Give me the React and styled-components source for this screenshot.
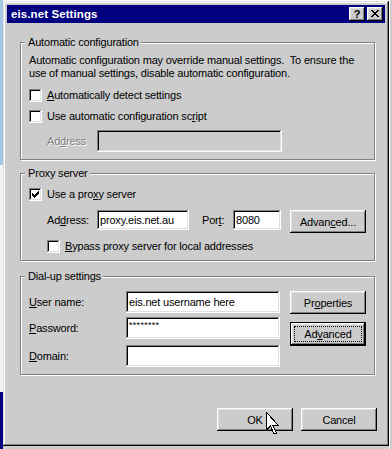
import React from "react";
import styled, { createGlobalStyle, css } from "styled-components";

const FACE = "#cccccc";

const raised = css`
  box-shadow: inset -1px -1px #000, inset 1px 1px #fff, inset -2px -2px #808080,
    inset 2px 2px #dfdfdf;
`;
const sunken = css`
  box-shadow: inset -1px -1px #fff, inset 1px 1px #808080, inset -2px -2px #dfdfdf,
    inset 2px 2px #000;
`;

const Global = createGlobalStyle`
  html, body { margin: 0; padding: 0; background: ${FACE}; }
  body {
    font-family: "Liberation Sans", Arial, sans-serif;
    font-size: 11px;
    letter-spacing: -0.18px;
    color: #000;
  }
  * { box-sizing: border-box; }
`;

const Page = styled.div`
  position: relative;
  display: flex;
  width: 392px;
  height: 449px;
  overflow: hidden;
  background: linear-gradient(#ffffff 0 1px, ${FACE} 1px);
`;

const LeftStrip = styled.div`
  flex: none;
  width: 3px;
  background: linear-gradient(
    to bottom,
    #a4c8e4 0,
    #a4c8e4 165px,
    #f2f2f2 165px,
    #f2f2f2 392px,
    #000080 392px
  );
`;

const RightStrip = styled.div`
  flex: 1;
  border-left: 1px solid #ffffff;
  background: ${FACE};
`;

const Dialog = styled.div`
  flex: none;
  width: 386px;
  height: 445px;
  margin-top: 1px;
  padding: 4px;
  background: ${FACE};
  box-shadow: inset -1px -1px #000, inset 1px 1px #dfdfdf, inset -2px -2px #808080,
    inset 2px 2px #fff;
  display: flex;
  flex-direction: column;
`;

const TitleBar = styled.div`
  flex: none;
  height: 18px;
  background: #000080;
  display: flex;
  align-items: center;
  padding: 0 2px 0 4px;
`;

const TitleText = styled.span`
  flex: 1;
  color: #fff;
  font-weight: bold;
  font-size: 11.5px;
  letter-spacing: 0.1px;
  white-space: nowrap;
`;

const CaptionButton = styled.div`
  width: 16px;
  height: 14px;
  margin-left: ${(p) => p.$ml || 0}px;
  background: ${FACE};
  ${raised};
  display: flex;
  align-items: center;
  justify-content: center;
  color: #000;
  font-weight: bold;
  font-size: 11px;
  line-height: 14px;
  padding-bottom: 1px;
`;

const Body = styled.div`
  flex: 1;
  display: flex;
  flex-direction: column;
  padding: 0 10px 0 13px;
`;

const Group = styled.div`
  margin-top: ${(p) => p.$mt}px;
  border: 1px solid #808080;
  box-shadow: inset 1px 1px #fff, 1px 1px #fff;
  padding: 0 8px ${(p) => p.$pb}px 8px;
  display: flex;
  flex-direction: column;
`;

const Legend = styled.div`
  align-self: flex-start;
  height: 13px;
  line-height: 13px;
  margin: -7px 0 0 -4px;
  padding: 0 2px 0 3px;
  background: ${FACE};
  white-space: nowrap;
`;

const Paragraph = styled.div`
  margin-top: ${(p) => p.$mt}px;
  line-height: 13px;
  white-space: pre;
`;

const CheckRow = styled.label`
  display: flex;
  align-items: center;
  height: 13px;
  margin: ${(p) => p.$mt}px 0 0 ${(p) => p.$indent || 0}px;
`;

const CheckBox = styled.span`
  flex: none;
  width: 13px;
  height: 13px;
  background: #fff;
  ${sunken};
  display: flex;
  align-items: center;
  justify-content: center;
`;

const CheckText = styled.span`
  margin-left: 5px;
  line-height: 13px;
  white-space: nowrap;
`;

const FieldRow = styled.div`
  display: flex;
  align-items: flex-start;
  margin: ${(p) => p.$mt || 0}px 0 0 ${(p) => p.$indent || 0}px;
`;

const Label = styled.span`
  flex: none;
  width: ${(p) => p.$w}px;
  margin-left: ${(p) => p.$ml || 0}px;
  height: ${(p) => p.$h}px;
  line-height: ${(p) => p.$h}px;
  white-space: nowrap;
  color: ${(p) => (p.$disabled ? "#808080" : "#000")};
  text-shadow: ${(p) => (p.$disabled ? "1px 1px 0 #fff" : "none")};
`;

const TextBox = styled.div`
  flex: none;
  width: ${(p) => p.$w}px;
  height: ${(p) => p.$h}px;
  background: ${(p) => (p.$disabled ? FACE : "#fff")};
  ${sunken};
  padding: 0 3px;
  display: flex;
  align-items: center;
  white-space: nowrap;
  overflow: hidden;
`;

const Mask = styled.span`
  font-size: 9px;
  letter-spacing: 0.3px;
  align-self: flex-start;
  margin-top: 3px;
  line-height: 10px;
`;

const Button = styled.div`
  flex: none;
  width: ${(p) => p.$w || 76}px;
  height: ${(p) => p.$h || 23}px;
  margin: ${(p) => p.$mt || 0}px 0 0 ${(p) => p.$ml || 0}px;
  background: ${FACE};
  display: flex;
  align-items: center;
  justify-content: center;
  white-space: nowrap;
  position: relative;
  ${(p) =>
    p.$default
      ? css`
          border: 1px solid #000;
          padding: 3px;
          box-shadow: inset -1px -1px #000, inset 1px 1px #fff, inset -2px -2px #808080,
            inset 2px 2px #dfdfdf;
        `
      : raised};
`;

const Focus = styled.span`
  flex: 1;
  align-self: stretch;
  border: 1px dotted #000;
  display: flex;
  align-items: center;
  justify-content: center;
`;

const DialupRow = styled.div`
  display: flex;
  margin-top: 8px;
`;

const Column = styled.div`
  display: flex;
  flex-direction: column;
  margin-left: ${(p) => p.$ml || 0}px;
`;

const Footer = styled.div`
  display: flex;
  justify-content: flex-end;
  gap: 8px;
  margin: 33px -2px 0 0;
`;

const Cursor = styled.svg`
  position: absolute;
  left: 266px;
  top: 412px;
  pointer-events: none;
`;

const CloseGlyph = () => (
  <svg width="8" height="7" viewBox="0 0 8 7" shapeRendering="crispEdges">
    <g fill="#000">
      <rect x="0" y="0" width="2" height="1" />
      <rect x="6" y="0" width="2" height="1" />
      <rect x="1" y="1" width="2" height="1" />
      <rect x="5" y="1" width="2" height="1" />
      <rect x="2" y="2" width="4" height="1" />
      <rect x="3" y="3" width="2" height="1" />
      <rect x="2" y="4" width="4" height="1" />
      <rect x="1" y="5" width="2" height="1" />
      <rect x="5" y="5" width="2" height="1" />
      <rect x="0" y="6" width="2" height="1" />
      <rect x="6" y="6" width="2" height="1" />
    </g>
  </svg>
);

const CheckMark = () => (
  <svg width="7" height="7" viewBox="0 0 7 7" shapeRendering="crispEdges">
    <g fill="#000">
      <rect x="6" y="0" width="1" height="1" />
      <rect x="5" y="1" width="2" height="1" />
      <rect x="0" y="2" width="1" height="1" />
      <rect x="4" y="2" width="3" height="1" />
      <rect x="0" y="3" width="2" height="1" />
      <rect x="3" y="3" width="3" height="1" />
      <rect x="0" y="4" width="5" height="1" />
      <rect x="1" y="5" width="3" height="1" />
      <rect x="2" y="6" width="1" height="1" />
    </g>
  </svg>
);

const Check = ({ checked, indent, mt, children }) => (
  <CheckRow $indent={indent} $mt={mt}>
    <CheckBox>{checked && <CheckMark />}</CheckBox>
    <CheckText>{children}</CheckText>
  </CheckRow>
);

export default function App() {
  return (
    <>
      <Global />
      <Page>
        <LeftStrip />
        <Dialog>
          <TitleBar>
            <TitleText>eis.net Settings</TitleText>
            <CaptionButton>?</CaptionButton>
            <CaptionButton $ml={2}>
              <CloseGlyph />
            </CaptionButton>
          </TitleBar>
          <Body>
            <Group $mt={19} $pb={7}>
              <Legend>Automatic configuration</Legend>
              <Paragraph $mt={5}>
                {"Automatic configuration may override manual settings.  To ensure the"}
                <br />
                {"use of manual settings, disable automatic configuration."}
              </Paragraph>
              <Check mt={9}>
                <u>A</u>utomatically detect settings
              </Check>
              <Check mt={8}>
                Use automatic configuration sc<u>r</u>ipt
              </Check>
              <FieldRow $mt={7} $indent={18}>
                <Label $w={50} $h={22} $disabled>
                  Ad<u>d</u>ress
                </Label>
                <TextBox $w={185} $h={22} $disabled />
              </FieldRow>
            </Group>

            <Group $mt={13} $pb={7}>
              <Legend>Proxy server</Legend>
              <Check mt={8} checked>
                Use a pro<u>x</u>y server
              </Check>
              <FieldRow $mt={9} $indent={18}>
                <Label $w={50} $h={20}>
                  Ad<u>d</u>ress:
                </Label>
                <TextBox $w={92} $h={20}>proxy.eis.net.au</TextBox>
                <Label $w={31} $h={20} $ml={13}>
                  Por<u>t</u>:
                </Label>
                <TextBox $w={48} $h={20}>8080</TextBox>
                <Button $ml={9}>
                  Advan<u>c</u>ed...
                </Button>
              </FieldRow>
              <Check mt={7} indent={18}>
                <u>B</u>ypass proxy server for local addresses
              </Check>
            </Group>

            <Group $mt={15} $pb={7}>
              <Legend>Dial-up settings</Legend>
              <DialupRow>
                <Column>
                  <FieldRow>
                    <Label $w={97} $h={22}>
                      <u>U</u>ser name:
                    </Label>
                    <TextBox $w={154} $h={22}>eis.net username here</TextBox>
                  </FieldRow>
                  <FieldRow $mt={4}>
                    <Label $w={97} $h={22}>
                      <u>P</u>assword:
                    </Label>
                    <TextBox $w={154} $h={22}>
                      <Mask>********</Mask>
                    </TextBox>
                  </FieldRow>
                  <FieldRow $mt={6}>
                    <Label $w={97} $h={22}>
                      <u>D</u>omain:
                    </Label>
                    <TextBox $w={154} $h={22} />
                  </FieldRow>
                </Column>
                <Column $ml={10}>
                  <Button>
                    Pr<u>o</u>perties
                  </Button>
                  <Button $default $mt={8} $h={24}>
                    <Focus>
                      Ad<u>v</u>anced
                    </Focus>
                  </Button>
                </Column>
              </DialupRow>
            </Group>

            <Footer>
              <Button>OK</Button>
              <Button>Cancel</Button>
            </Footer>
          </Body>
        </Dialog>
        <RightStrip />
        <Cursor width="14" height="24" viewBox="0 0 14 24">
          <path
            d="M0.5 0.5 V18 L4.5 14 L8 22 L10.5 21 L7 13.5 H12.5 Z"
            fill="#fff"
            stroke="#000"
            strokeWidth="1"
            shapeRendering="crispEdges"
          />
        </Cursor>
      </Page>
    </>
  );
}
